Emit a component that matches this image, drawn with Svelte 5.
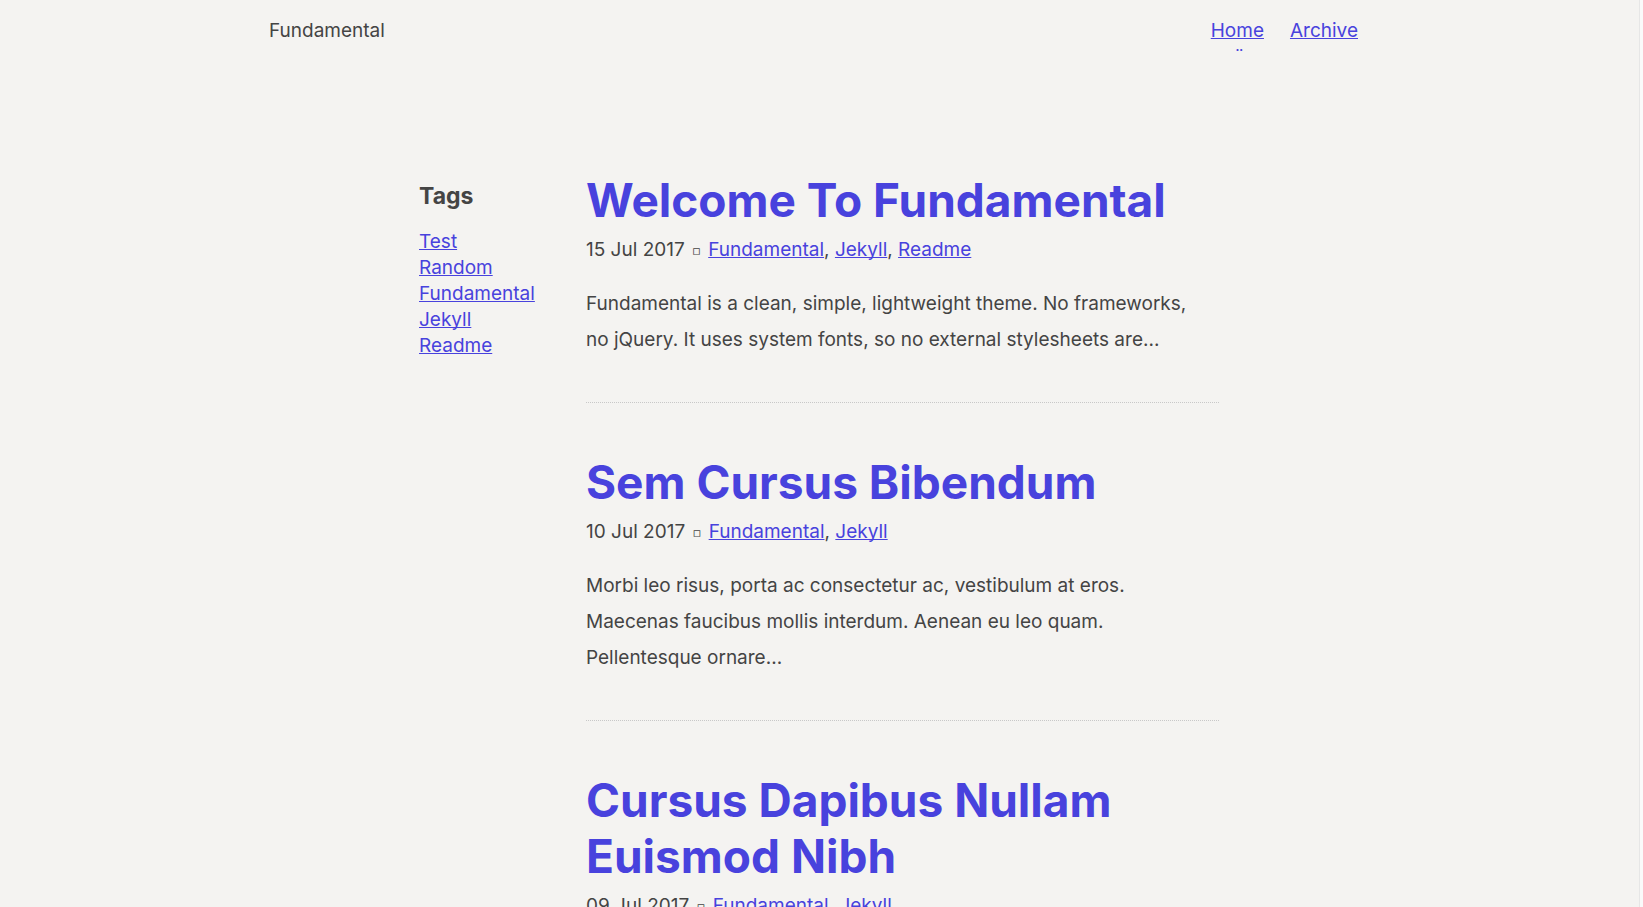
<script>
  const nav = [
    { label: 'Home', current: true },
    { label: 'Archive', current: false }
  ];
  const tags = ['Test', 'Random', 'Fundamental', 'Jekyll', 'Readme'];
  const posts = [
    {
      title: 'Welcome To Fundamental',
      date: '15 Jul 2017',
      tags: ['Fundamental', 'Jekyll', 'Readme'],
      text: 'Fundamental is a clean, simple, lightweight theme. No frameworks, no jQuery. It uses system fonts, so no external stylesheets are...'
    },
    {
      title: 'Sem Cursus Bibendum',
      date: '10 Jul 2017',
      tags: ['Fundamental', 'Jekyll'],
      text: 'Morbi leo risus, porta ac consectetur ac, vestibulum at eros. Maecenas faucibus mollis interdum. Aenean eu leo quam. Pellentesque ornare...'
    },
    {
      title: 'Cursus Dapibus Nullam Euismod Nibh',
      date: '09 Jul 2017',
      tags: ['Fundamental', 'Jekyll'],
      text: ''
    }
  ];
</script>

<div class="page">
  <header>
    <span>Fundamental</span>
    <nav aria-label="Main">
      {#each nav as item}
        <a href="#top" class:current={item.current}>{item.label}</a>
      {/each}
    </nav>
  </header>

  <div class="columns">
    <aside>
      <h2>Tags</h2>
      <ul>
        {#each tags as tag}
          <li><a href="#tag">{tag}</a></li>
        {/each}
      </ul>
    </aside>
    <main>
      {#each posts as post}
        <article>
          <h1><a href="#post">{post.title}</a></h1>
          <div class="meta">
            <time>{post.date}</time> <span class="mark">▫</span>
            {#each post.tags as tag, i}{#if i > 0}{', '}{/if}<a href="#tag">{tag}</a>{/each}
          </div>
          {#if post.text}<p>{post.text}</p>{/if}
        </article>
      {/each}
    </main>
  </div>
</div>

<style>
  :global(html) {
    overflow: hidden;
  }
  :global(body) {
    margin: 0;
    background: #f4f3f1;
  }
  .page {
    box-sizing: border-box;
    height: 100vh;
    overflow: hidden;
    border-right: 3px solid #fafafa;
    box-shadow: inset -1px 0 #e6e6e6;
    background: #f4f3f1;
    color: #444;
    font: 19px/26px Inter, sans-serif;
  }
  a {
    color: #4842dd;
    text-decoration: underline;
    text-decoration-thickness: 1px;
    text-underline-offset: 1px;
    text-decoration-skip-ink: none;
  }
  header {
    display: flex;
    justify-content: space-between;
    box-sizing: border-box;
    max-width: 1102px;
    margin: 0 auto;
    padding: 18px 13px 0 0;
  }
  nav {
    display: flex;
    gap: 26px;
  }
  .current {
    position: relative;
  }
  .current::after {
    content: '¨';
    position: absolute;
    top: 28px;
    left: 4px;
    right: 0;
    text-align: center;
    font-size: 18px;
    line-height: 20px;
  }
  .columns {
    display: grid;
    grid-template-columns: 125px minmax(0, 1fr);
    column-gap: 42px;
    max-width: 800px;
    margin: 128px auto 0;
    padding-right: 2px;
  }
  h2 {
    margin: 9px 0 18px;
    font-size: 23px;
    line-height: 30px;
  }
  ul {
    margin: 0;
    padding: 0;
    list-style: none;
  }
  article {
    padding-bottom: 44px;
    margin-bottom: 51px;
    border-bottom: 1px dotted #c8c8c8;
  }
  h1 {
    margin: 0 0 9px;
    font-size: 46px;
    line-height: 56px;
  }
  h1 a {
    text-decoration: none;
  }
  .mark {
    margin: 0 2px;
    font-family: "DejaVu Sans", sans-serif;
    font-size: 13px;
    line-height: 20px;
    vertical-align: 1px;
  }
  p {
    margin: 23px 0 0;
    padding-right: 12px;
    line-height: 36px;
  }
</style>
